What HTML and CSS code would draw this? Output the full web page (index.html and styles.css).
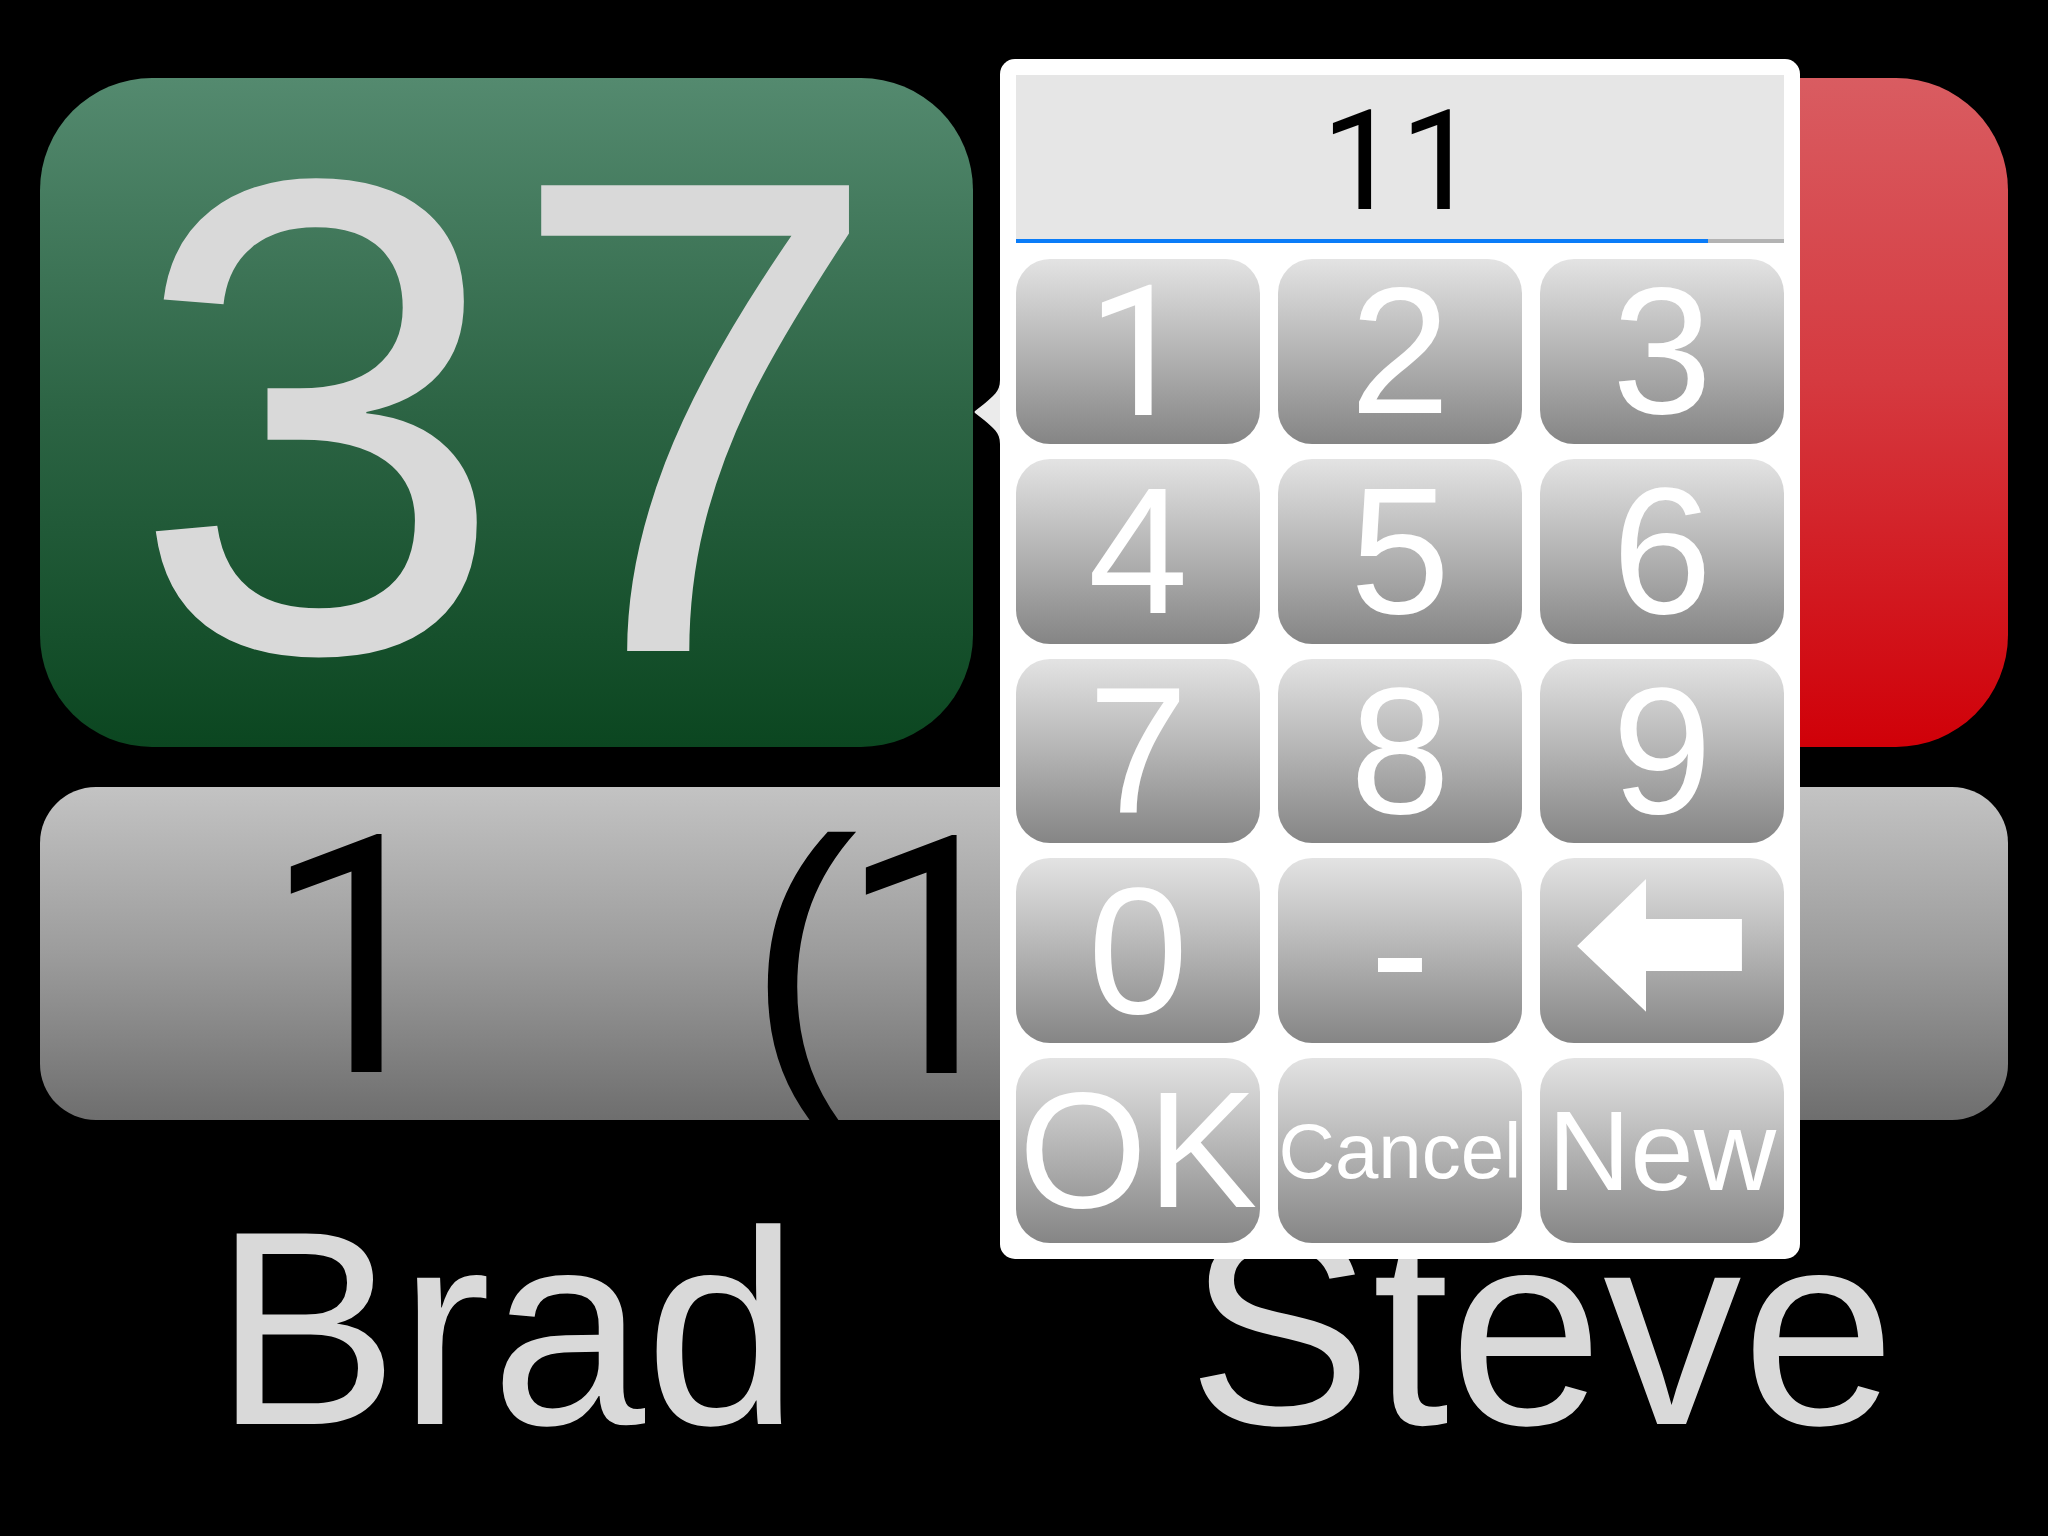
FILE: index.html
```html
<!DOCTYPE html>
<html lang="en">
<head>
<meta charset="utf-8">
<title>Scoreboard</title>
<link rel="stylesheet" href="styles.css">
</head>
<body>
<div class="screen">
  <div class="cards">
    <div class="card card-green"><span class="score">37</span></div>
    <div class="card card-red"></div>
  </div>
  <div class="bar">
    <span class="one">1</span>
    <span class="bar-sub"><span class="paren">(</span><span class="one">1</span>)</span>
  </div>
  <div class="names">
    <div class="name">Brad</div>
    <div class="name">Steve</div>
  </div>

  <div class="popover">
    <svg class="tail" viewBox="0 0 26 64" width="26" height="64" aria-hidden="true">
      <path d="M26 0 C26 12 19 16 10 24 L1 31 Q0 32 1 33 L10 40 C19 48 26 52 26 64 Z" fill="#ebebeb"/>
    </svg>
    <div class="field">
      <div class="field-value"><span class="one">1</span><span class="one">1</span></div>
    </div>
    <div class="underline"><span class="underline-blue"></span></div>
    <div class="keys">
      <div class="key key-one"><span class="one">1</span></div>
      <div class="key">2</div>
      <div class="key">3</div>
      <div class="key">4</div>
      <div class="key">5</div>
      <div class="key">6</div>
      <div class="key">7</div>
      <div class="key">8</div>
      <div class="key">9</div>
      <div class="key">0</div>
      <div class="key">-</div>
      <div class="key key-back">
        <svg viewBox="0 0 244 185" width="244" height="185" aria-hidden="true">
          <path d="M37 88 L106 21 V61 H202 V113 H106 V154 Z" fill="#ffffff"/>
        </svg>
      </div>
      <div class="key key-ok">OK</div>
      <div class="key key-cancel">Cancel</div>
      <div class="key key-new">New</div>
    </div>
  </div>
</div>
</body>
</html>
```

FILE: styles.css
```css
html, body {
  margin: 0;
  padding: 0;
  background: #000;
}

body {
  font-family: "Liberation Sans", Arial, Helvetica, sans-serif;
}

/* footless figure one, as in the original typeface */
.one {
  font-family: Roboto, "Liberation Sans", Arial, sans-serif;
}

.screen {
  position: relative;
  width: 2048px;
  height: 1536px;
  box-sizing: border-box;
  padding: 78px 40px 0 40px;
  background: #000;
  overflow: hidden;
}

.cards {
  display: grid;
  grid-template-columns: 933px 933px;
  column-gap: 102px;
  height: 669px;
}

.card {
  border-radius: 112px;
  display: flex;
  align-items: center;
  justify-content: center;
  box-sizing: border-box;
  padding-top: 7px;
  overflow: hidden;
}

.card-green {
  background: linear-gradient(to bottom, #548a6f 0%, #2c6444 50%, #0b4620 100%);
}

.card-red {
  background: linear-gradient(to bottom, #d95c61 0%, #d53a40 45%, #d00008 100%);
}

.score {
  font-size: 677px;
  line-height: 1;
  color: #d9d9d9;
}

.bar {
  margin-top: 40px;
  height: 333px;
  width: 1968px;
  border-radius: 56px;
  background: linear-gradient(to bottom, #c3c3c3 0%, #9c9c9c 50%, #6e6e6e 100%);
  display: flex;
  align-items: center;
  box-sizing: border-box;
  padding-left: 223px;
  padding-top: 10px;
  overflow: hidden;
  font-size: 333px;
  line-height: 1;
  color: #000;
  white-space: nowrap;
}

.bar-sub {
  margin-left: 297px;
}

.paren {
  margin-right: -20px;
}

.names {
  margin-top: 70px;
  display: grid;
  grid-template-columns: 933px 933px;
  column-gap: 102px;
}

.name {
  text-align: center;
  font-size: 277px;
  line-height: 1;
  color: #d9d9d9;
}

.popover {
  position: absolute;
  left: 1000px;
  top: 59px;
  width: 800px;
  height: 1200px;
  box-sizing: border-box;
  padding: 16px;
  background: #fff;
  border-radius: 15px;
}

.tail {
  position: absolute;
  left: -26px;
  top: 321px;
  display: block;
}

.field {
  height: 164px;
  background: #e6e6e6;
  display: flex;
  align-items: center;
  justify-content: center;
  box-sizing: border-box;
  padding-top: 8px;
}

.field-value {
  font-size: 140px;
  line-height: 1;
  color: #000;
}

.underline {
  height: 4px;
  background: #b3b3b3;
  display: flex;
}

.underline-blue {
  width: 692px;
  height: 100%;
  background: #0a7cf8;
}

.keys {
  margin-top: 16px;
  height: 984px;
  display: grid;
  grid-template-columns: repeat(3, 1fr);
  grid-template-rows: repeat(5, 1fr);
  gap: 15px 18px;
}

.key {
  border-radius: 34px;
  background: linear-gradient(to bottom, #e3e3e3 0%, #b4b4b4 50%, #858585 100%);
  color: #fff;
  font-size: 180px;
  line-height: 1;
  display: flex;
  align-items: center;
  justify-content: center;
  box-sizing: border-box;
  overflow: hidden;
  white-space: nowrap;
}

.key-one {
  font-size: 182px;
  padding-top: 4px;
}

.key-back svg {
  display: block;
  width: 100%;
  height: 100%;
}

.key-ok {
  font-size: 165px;
}

.key-cancel {
  font-size: 78px;
}

.key-new {
  font-size: 114px;
}
```
